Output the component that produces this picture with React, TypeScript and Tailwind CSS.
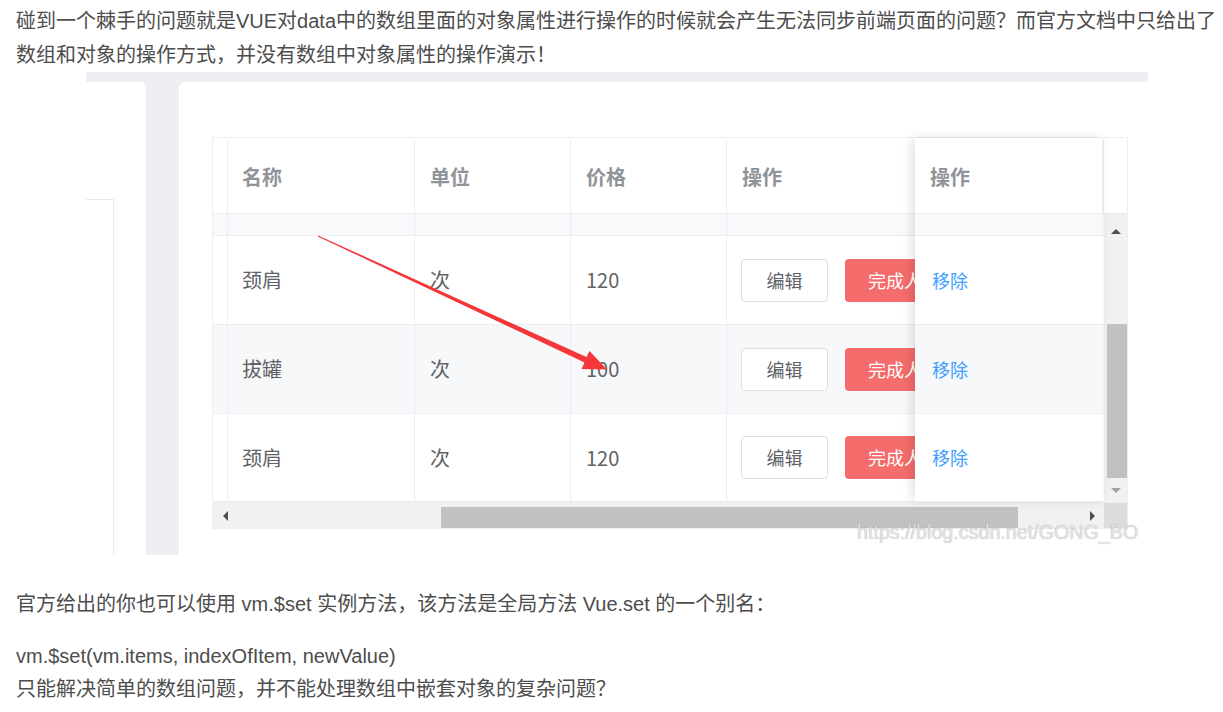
const rows = [
  { name: '颈肩', unit: '次', price: '120', bg: 'bg-white' },
  { name: '拔罐', unit: '次', price: '100', bg: 'bg-[#f7f8fa]' },
  { name: '颈肩', unit: '次', price: '120', bg: 'bg-white' },
];

const cjk = { fontFamily: '"Liberation Sans", "Noto Sans CJK SC", sans-serif' };
const yahei = { fontFamily: '"Noto Sans CJK SC", "Liberation Sans", sans-serif' };

function DataTable() {
  return (
    <div className="relative w-[916px] border border-[#ebeef5] text-[20px]" style={yahei}>
      {/* header */}
      <div className="flex h-[76px] border-b border-[#ebeef5] font-bold text-[#909399] pt-[2px]">
        <div className="w-[15px] border-r border-[#ebeef5]" />
        <div className="w-[187px] border-r border-[#ebeef5] flex items-center pl-[14px]">名称</div>
        <div className="w-[156px] border-r border-[#ebeef5] flex items-center pl-[15px]">单位</div>
        <div className="w-[156px] border-r border-[#ebeef5] flex items-center pl-[15px]">价格</div>
        <div className="w-[377px] border-r border-[#ebeef5] flex items-center pl-[15px]">操作</div>
        <div className="flex-1" />
      </div>

      {/* body */}
      <div className="flex">
        <div className="w-[891px]">
          <div className="flex h-[22px] border-b border-[#ebeef5] bg-[#f8f9fb]">
            <div className="w-[15px] border-r border-[#ebeef5]" />
            <div className="w-[187px] border-r border-[#ebeef5]" />
            <div className="w-[156px] border-r border-[#ebeef5]" />
            <div className="w-[156px] border-r border-[#ebeef5]" />
            <div className="flex-1" />
          </div>
          {rows.map((r, i) => (
            <div key={i} className={`flex border-b border-[#ebeef5] text-[#606266] ${r.bg} ${i === 2 ? 'h-[88px]' : 'h-[89px]'}`}>
              <div className="w-[15px] border-r border-[#ebeef5]" />
              <div className="w-[187px] border-r border-[#ebeef5] flex items-center pl-[14px]">{r.name}</div>
              <div className="w-[156px] border-r border-[#ebeef5] flex items-center pl-[15px]">{r.unit}</div>
              <div className="w-[156px] border-r border-[#ebeef5] flex items-center pl-[15px]">{r.price}</div>
              <div className="flex-1">
                {/* part left of the fixed column; the rest is hidden under it */}
                <div className="w-[188px] h-full flex items-center pl-[14px] gap-[17px] overflow-hidden">
                  <div className="w-[87px] h-[43px] shrink-0 rounded-[4px] border border-[#dcdfe6] bg-white flex items-center justify-center text-[18px] text-[#606266]">编辑</div>
                  <div className="w-[130px] h-[43px] shrink-0 rounded-[4px] bg-[#f56c6c] flex items-center pl-[23px] text-[18px] text-white whitespace-nowrap">完成人数</div>
                </div>
              </div>
            </div>
          ))}
        </div>
        {/* vertical scrollbar */}
        <div className="flex-1 flex flex-col bg-[#f1f1f1] pl-[3px]">
          <div className="h-[30px] flex items-end justify-center pb-[10px] pr-[3px]">
            <div className="w-0 h-0 border-l-[5px] border-r-[5px] border-b-[5px] border-l-transparent border-r-transparent border-b-[#505050]" />
          </div>
          <div className="h-[80px]" />
          <div className="h-[154px] bg-[#c1c1c1]" />
          <div className="flex-1 flex items-center justify-center pr-[3px]">
            <div className="w-0 h-0 border-l-[5px] border-r-[5px] border-t-[5px] border-l-transparent border-r-transparent border-t-[#a3a3a3]" />
          </div>
        </div>
      </div>

      {/* horizontal scrollbar */}
      <div className="flex h-[26px] border-t border-[#ebeef5]">
        <div className="relative w-[891px] bg-[#f1f1f1] flex items-center">
          <div className="ml-[10px] w-0 h-0 border-t-[5px] border-b-[5px] border-r-[5px] border-t-transparent border-b-transparent border-r-[#505050]" />
          <div className="ml-[213px] mt-[4px] self-stretch w-[577px] bg-[#c1c1c1]" />
          <div className="ml-auto mr-[9px] w-0 h-0 border-t-[5px] border-b-[5px] border-l-[5px] border-t-transparent border-b-transparent border-l-[#505050]" />
        </div>
        <div className="flex-1 bg-[#dcdcdc]" />
      </div>

      {/* fixed right column */}
      <div className="absolute top-0 left-[702px] w-[188px] bottom-[27px] bg-white shadow-[-3px_0_10px_rgba(0,0,0,0.12)]">
        <div className="h-[76px] border-b border-r border-[#ebeef5] flex items-center pl-[15px] pt-[2px] font-bold text-[#909399]">操作</div>
        <div className="h-[22px] border-b border-[#ebeef5] bg-[#f8f9fb]" />
        {rows.map((r, i) => (
          <div key={i} className={`flex items-center pl-[17px] border-b border-[#ebeef5] text-[18px] text-[#409eff] ${r.bg} ${i === 2 ? 'h-[88px]' : 'h-[89px]'}`}>
            移除
          </div>
        ))}
      </div>
    </div>
  );
}

export default function App() {
  return (
    <div className="w-[1223px] h-[712px] bg-white overflow-hidden text-[#4d4d4d] text-[20px]" style={cjk}>
      <p className="pl-4 pt-[4px] leading-[34px] whitespace-nowrap">
        碰到一个棘手的问题就是VUE对data中的数组里面的对象属性进行操作的时候就会产生无法同步前端页面的问题？而官方文档中只给出了
        <br />
        数组和对象的操作方式，并没有数组中对象属性的操作演示！
      </p>

      {/* embedded screenshot */}
      <div className="relative ml-[86px] w-[1062px] h-[483px] bg-[#eeeef3] pt-[10px]">
        <div className="flex h-full gap-[33px]">
          <div className="w-[60px] bg-white rounded-tr-[6px] pt-[117px]">
            <div className="w-[28px] h-full border-t border-r border-[#e8eaf1]" />
          </div>
          <div className="flex-1 bg-white rounded-tl-[6px] pl-[33px] pt-[55px]">
            <DataTable />
          </div>
        </div>

        <svg className="absolute inset-0 w-full h-full pointer-events-none" viewBox="86 72 1062 483">
          <polygon
            fill="#f5373a"
            points="317.8,236.5 584.5,362.5 581.5,369 607,369.5 589.5,351 586.5,357.1 318.2,235.5"
          />
        </svg>

        <div
          className="absolute left-[771px] top-[448px] text-[19.7px] leading-[24px] text-[#e4e4e4] whitespace-nowrap [text-shadow:0_0_1px_rgba(0,0,0,0.35)]"
          style={{ fontFamily: '"Liberation Sans", sans-serif' }}
        >
          https://blog.csdn.net/GONG_BO
        </div>
      </div>

      <p className="pl-4 mt-[33px] leading-[33px] whitespace-nowrap">
        官方给出的你也可以使用 vm.$set 实例方法，该方法是全局方法 Vue.set 的一个别名：
      </p>
      <p className="pl-4 mt-[19px] leading-[33px] whitespace-nowrap">
        vm.$set(vm.items, indexOfItem, newValue)
        <br />
        只能解决简单的数组问题，并不能处理数组中嵌套对象的复杂问题？
      </p>
    </div>
  );
}
